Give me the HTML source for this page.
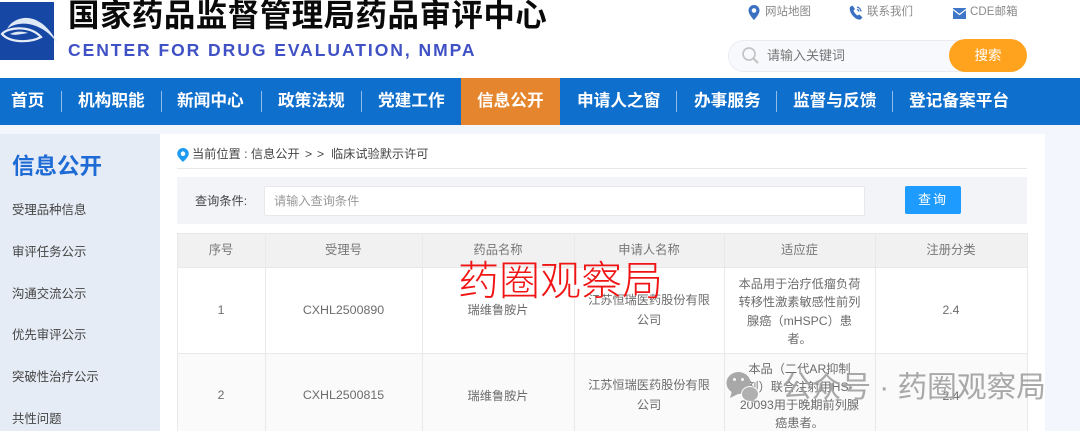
<!DOCTYPE html>
<html lang="zh"><head><meta charset="utf-8">
<style>
html,body{margin:0;padding:0}
body{width:1080px;height:431px;overflow:hidden;background:#fff;position:relative;font-family:"Liberation Sans","Noto Sans CJK SC",sans-serif;color:#666}
.a{position:absolute;white-space:nowrap;line-height:1}
.b{position:absolute}
.nav{color:#fff;font-size:16.7px;font-weight:700;top:93px}
.sep{position:absolute;top:91px;width:1px;height:21px;background:#8fbce8}
.side{left:12px;font-size:12.4px;color:#444}
.top{font-size:11.5px;color:#8a8a8a;top:7px}
.cell{position:absolute;text-align:center;font-size:12.2px;line-height:20px;color:#6c6c6c}
.th{position:absolute;top:243px;text-align:center;font-size:12.3px;line-height:15px;color:#777}
.vl{position:absolute;top:233px;height:198px;width:1px;background:#e9e9e9}
</style></head><body>
<!-- logo -->
<svg class="b" style="left:0;top:2px" width="60" height="60" viewBox="0 0 60 60">
<rect x="0" y="0" width="54" height="58" fill="#1747a5"/>
<path d="M58 42 C50 26 38 15 24 16 C16 17 10 21 7 27 C14 21 26 20 36 24 C46 28 52 34 58 42Z" fill="#dfe8f5"/>
<path d="M2 32 C8 25 30 23 41 35 C30 41 10 41 2 32Z" fill="none" stroke="#e6edf7" stroke-width="2.200"/>
<path d="M10 32 C15 29 23 29 28 31 C21 32 15 34 10 32Z" fill="#dfe8f5"/>
</svg>
<div class="a" style="left:68px;top:0;font-size:31.500px;font-weight:700;color:#0a0a0a;letter-spacing:.45px">国家药品监督管理局药品审评中心</div>
<div class="a" style="left:68px;top:42px;font-size:17.500px;font-weight:700;color:#3f51c4;letter-spacing:1.950px">CENTER FOR DRUG EVALUATION, NMPA</div>

<!-- top links -->
<svg class="b" style="left:748px;top:5px" width="12" height="15" viewBox="0 0 12 15"><path d="M6 0a5.500 5.500 0 0 0-5.500 5.500C.5 9.500 6 15 6 15s5.500-5.500 5.500-9.500A5.500 5.500 0 0 0 6 0zm0 7.800a2.300 2.300 0 1 1 0-4.600 2.300 2.300 0 0 1 0 4.600z" fill="#3a70c2"/></svg>
<div class="a top" style="left:765px">网站地图</div>
<svg class="b" style="left:849px;top:5px" width="14" height="15" viewBox="0 0 14 15"><path d="M3.500 .5 1 2c-1 3 1 7 3.500 9.500 2 2 4.500 3.500 7 3l2-2-3-3-2 1C7 9.500 5 7.500 4.500 5.500l1.500-1.500z" fill="#3a70c2"/><path d="M8 2a5 5 0 0 1 4 4.500M8 4.500A2.500 2.500 0 0 1 10 6.500" fill="none" stroke="#3a70c2" stroke-width="1.300"/></svg>
<div class="a top" style="left:867px">联系我们</div>
<svg class="b" style="left:953px;top:8px" width="13" height="11" viewBox="0 0 13 11"><rect y="0" width="13" height="11" fill="#3f76c8"/><path d="M0 1.500 6.500 6.500 13 1.500" fill="none" stroke="#fff" stroke-width="1.200"/></svg>
<div class="a top" style="left:970px;letter-spacing:.1px">CDE邮箱</div>

<!-- search -->
<div class="b" style="left:728px;top:40px;width:270px;height:30px;border:1px solid #ececf0;border-radius:16px;background:#f8f9fc"></div>
<svg class="b" style="left:741px;top:46px" width="20" height="20" viewBox="0 0 20 20"><circle cx="8" cy="8" r="6" fill="none" stroke="#c4c4c4" stroke-width="1.700"/><path d="M12.500 12.500 17 17" stroke="#c4c4c4" stroke-width="2.200"/></svg>
<div class="a" style="left:767px;top:49px;font-size:13px;color:#777">请输入关键词</div>
<div class="a" style="left:949px;top:39px;width:78px;height:33px;border-radius:17px;background:#ffa31f;color:#fff;font-size:13.500px;line-height:34px;text-align:center">搜索</div>

<!-- nav -->
<div class="b" style="left:0;top:78px;width:1080px;height:47px;background:#0f6fcd"></div>
<div class="b" style="left:461px;top:78px;width:99px;height:47px;background:#e5852d"></div>
<div class="a nav" style="left:11px">首页</div><div class="sep" style="left:61px"></div>
<div class="a nav" style="left:78px">机构职能</div><div class="sep" style="left:161px"></div>
<div class="a nav" style="left:177px">新闻中心</div><div class="sep" style="left:261px"></div>
<div class="a nav" style="left:278px">政策法规</div><div class="sep" style="left:361px"></div>
<div class="a nav" style="left:378px">党建工作</div>
<div class="a nav" style="left:477px">信息公开</div>
<div class="a nav" style="left:577px">申请人之窗</div><div class="sep" style="left:676px"></div>
<div class="a nav" style="left:694px">办事服务</div><div class="sep" style="left:776px"></div>
<div class="a nav" style="left:793px">监督与反馈</div><div class="sep" style="left:892px"></div>
<div class="a nav" style="left:909px">登记备案平台</div>

<!-- page -->
<div class="b" style="left:0;top:125px;width:1080px;height:306px;background:#f3f7fd"></div>
<div class="b" style="left:0;top:134px;width:160px;height:297px;background:#e6ecf5"></div>
<div class="b" style="left:160px;top:134px;width:885px;height:297px;background:#fff"></div>

<div class="a" style="left:12px;top:156px;font-size:22.500px;font-weight:700;color:#1f6bd6">信息公开</div>
<div class="a side" style="top:204px">受理品种信息</div>
<div class="a side" style="top:246px">审评任务公示</div>
<div class="a side" style="top:288px">沟通交流公示</div>
<div class="a side" style="top:329px">优先审评公示</div>
<div class="a side" style="top:371px">突破性治疗公示</div>
<div class="a side" style="top:413px">共性问题</div>

<!-- breadcrumb -->
<svg class="b" style="left:177px;top:148px" width="12" height="14" viewBox="0 0 12 14"><path d="M6 0a5.800 5.800 0 0 0-5.800 5.800C.2 9 6 14 6 14s5.800-5 5.800-8.200A5.800 5.800 0 0 0 6 0zm0 8a2.300 2.300 0 1 1 0-4.600A2.300 2.300 0 0 1 6 8z" fill="#1e9bf0"/></svg>
<div class="a" style="left:192px;top:148px;font-size:12.200px;color:#444">当前位置 : 信息公开</div>
<div class="a" style="left:305px;top:148px;font-size:12.200px;color:#444">&gt;</div>
<div class="a" style="left:317px;top:148px;font-size:12.200px;color:#444">&gt;</div>
<div class="a" style="left:331px;top:148px;font-size:12.200px;color:#444">临床试验默示许可</div>
<div class="b" style="left:177px;top:168px;width:850px;height:1px;background:#e8e8e8"></div>

<!-- query -->
<div class="b" style="left:177px;top:177px;width:850px;height:47px;background:#f3f4f8"></div>
<div class="a" style="left:195px;top:195px;font-size:12.200px;color:#444">查询条件:</div>
<div class="b" style="left:264px;top:186px;width:599px;height:28px;border:1px solid #e8e8e8;border-radius:2px;background:#fff"></div>
<div class="a" style="left:274px;top:195px;font-size:12.200px;color:#999">请输入查询条件</div>
<div class="a" style="left:905px;top:186px;width:56px;height:28px;border-radius:2px;background:#1e9bff;color:#fff;font-size:13px;line-height:28px;text-align:center;letter-spacing:2px">查询</div>

<!-- table -->
<div class="b" style="left:177px;top:233px;width:850px;height:34px;background:#f1f1f1"></div>
<div class="b" style="left:177px;top:233px;width:850px;height:1px;background:#e6e6e6"></div>
<div class="b" style="left:177px;top:267px;width:850px;height:1px;background:#e9e9e9"></div>
<div class="b" style="left:177px;top:354px;width:850px;height:77px;background:#fafafa"></div>
<div class="b" style="left:177px;top:353px;width:850px;height:1px;background:#e9e9e9"></div>
<div class="vl" style="left:177px"></div><div class="vl" style="left:265px"></div><div class="vl" style="left:422px"></div><div class="vl" style="left:574px"></div><div class="vl" style="left:724px"></div><div class="vl" style="left:875px"></div><div class="vl" style="left:1027px"></div>

<div class="th" style="left:177px;width:88px">序号</div>
<div class="th" style="left:265px;width:157px">受理号</div>
<div class="th" style="left:422px;width:152px">药品名称</div>
<div class="th" style="left:574px;width:150px">申请人名称</div>
<div class="th" style="left:724px;width:151px">适应症</div>
<div class="th" style="left:875px;width:152px">注册分类</div>

<div class="cell" style="left:177px;width:88px;top:300px">1</div>
<div class="cell" style="left:265px;width:157px;top:300px;font-size:12.400px">CXHL2500890</div>
<div class="cell" style="left:422px;width:152px;top:300px">瑞维鲁胺片</div>
<div class="cell" style="left:574px;width:150px;top:290px">江苏恒瑞医药股份有限<br>公司</div>
<div class="cell" style="left:724px;width:151px;top:275px;line-height:18.300px">本品用于治疗低瘤负荷<br>转移性激素敏感性前列<br>腺癌（mHSPC）患<br>者。</div>
<div class="cell" style="left:875px;width:152px;top:300px">2.4</div>

<div class="cell" style="left:177px;width:88px;top:385px">2</div>
<div class="cell" style="left:265px;width:157px;top:385px;font-size:12.400px">CXHL2500815</div>
<div class="cell" style="left:422px;width:152px;top:386px">瑞维鲁胺片</div>
<div class="cell" style="left:574px;width:150px;top:375px">江苏恒瑞医药股份有限<br>公司</div>
<div class="cell" style="left:724px;width:151px;top:360px;line-height:18px">本品（二代AR抑制<br>剂）联合注射用HS-<br>20093用于晚期前列腺<br>癌患者。</div>
<div class="cell" style="left:875px;width:152px;top:386px">2.4</div>

<!-- overlays -->
<div class="a" style="left:458px;top:261px;font-size:41px;font-weight:300;color:#f01414">药圈观察局</div>
<svg class="b" style="left:726px;top:370px" width="36" height="34" viewBox="0 0 36 34"><ellipse cx="12.500" cy="13" rx="12" ry="11" fill="#a8a8a8"/><path d="M6 21 4 28 12 24z" fill="#a8a8a8"/><ellipse cx="24" cy="24" rx="8.500" ry="7.500" fill="#b0b0b0" stroke="#fafafa" stroke-width="1"/><path d="M28 30 31 33 25 31z" fill="#b0b0b0"/><circle cx="8.500" cy="9.500" r="1.500" fill="#fafafa"/><circle cx="16.500" cy="9.500" r="1.500" fill="#fafafa"/></svg>
<div class="a" style="left:782px;top:373px;font-size:29.700px;font-weight:400;color:#a0a0a0;opacity:.9">公众号 · 药圈观察局</div>
</body></html>
